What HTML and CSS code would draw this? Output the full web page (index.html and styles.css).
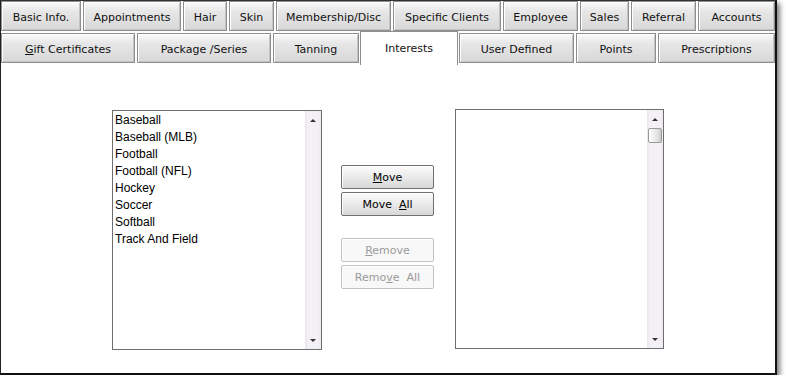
FILE: index.html
```html
<!DOCTYPE html>
<html lang="en">
<head>
  <meta charset="UTF-8">
  <title>Client Interests</title>
  <link rel="stylesheet" href="styles.css">
</head>
<body>

  <div class="window">
    <div class="tabs tabs-top">
      <div class="tab">Basic Info.</div>
      <div class="tab">Appointments</div>
      <div class="tab">Hair</div>
      <div class="tab">Skin</div>
      <div class="tab">Membership/Disc</div>
      <div class="tab">Specific Clients</div>
      <div class="tab">Employee</div>
      <div class="tab">Sales</div>
      <div class="tab">Referral</div>
      <div class="tab">Accounts</div>
    </div>
    <div class="tabs tabs-bottom">
      <div class="tab"><u>G</u>ift Certificates</div>
      <div class="tab">Package /Series</div>
      <div class="tab">Tanning</div>
      <div class="tab active">Interests</div>
      <div class="tab">User Defined</div>
      <div class="tab">Points</div>
      <div class="tab">Prescriptions</div>
    </div>

    <div class="panel">
      <div class="listbox">
        <ul class="items">
          <li>Baseball</li>
          <li>Baseball (MLB)</li>
          <li>Football</li>
          <li>Football (NFL)</li>
          <li>Hockey</li>
          <li>Soccer</li>
          <li>Softball</li>
          <li>Track And Field</li>
        </ul>
        <div class="scrollbar">
          <span class="arrow up"></span>
          <span class="arrow down"></span>
        </div>
      </div>

      <div class="actions">
        <button class="btn"><u>M</u>ove</button>
        <button class="btn">Move&nbsp; <u>A</u>ll</button>
        <button class="btn spaced" disabled><u>R</u>emove</button>
        <button class="btn" disabled>Remo<u>v</u>e&nbsp; All</button>
      </div>

      <div class="listbox listbox-right">
        <ul class="items"></ul>
        <div class="scrollbar">
          <span class="arrow up"></span>
          <span class="thumb"></span>
          <span class="arrow down"></span>
        </div>
      </div>
    </div>
  </div>

</body>
</html>
```

FILE: styles.css
```css
* {
  margin: 0;
  padding: 0;
  box-sizing: border-box;
}

body {
  font-family: 'DejaVu Sans', sans-serif;
  font-size: 11px;
  background-color: #fff;
  color: #000;
}

.window {
  width: 777px;
  height: 375px;
  background-color: #fff;
  border-top: 1px solid #333;
  border-left: 1px solid #222;
  border-right: 2px solid #111;
  border-bottom: 2px solid #111;
  box-shadow: 3px 3px 5px rgba(0, 0, 0, 0.5);
}

.tabs {
  display: grid;
  column-gap: 2px;
  height: 30px;
}

.tabs-top {
  grid-template-columns: 80px 98px 44px 45px 115px 108px 75px 49px 65px 77px;
}

.tabs-bottom {
  margin-top: 2px;
  grid-template-columns: 134px 134px 86px 96px 115px 80px 117px;
}

.tab {
  display: flex;
  align-items: center;
  justify-content: center;
  padding-top: 2px;
  color: #111;
  border: 1px solid #8e8e8e;
  background: linear-gradient(to bottom, #fbfbfb 0%, #e6e6e6 35%, #d8d8d8 100%);
  box-shadow: inset 1px 1px 0 #fff, inset -1px -1px 0 #c4c4c4;
  white-space: nowrap;
}

.tab.active {
  position: relative;
  z-index: 2;
  margin: -2px -1px -2px -1px;
  padding-top: 0;
  background: #fff;
  border-color: #8e8e8e;
  border-bottom: none;
  box-shadow: inset 1px 1px 0 #fff;
}

.panel {
  display: flex;
  align-items: flex-start;
  height: 310px;
  padding: 47px 0 0 111px;
}

.listbox {
  display: flex;
  width: 210px;
  height: 240px;
  border: 1px solid #6e6e6e;
  background-color: #fff;
}

.listbox-right {
  width: 209px;
  margin-top: -1px;
  margin-left: 21px;
}

.items {
  flex: 1;
  list-style: none;
  padding: 1px 0 0 2px;
  font-family: 'Liberation Sans', Arial, sans-serif;
  font-size: 12px;
  line-height: 17px;
}

.scrollbar {
  position: relative;
  width: 16px;
  background: linear-gradient(to right, #e8e6ec 0, #f3f1f5 3px, #f3f1f5 13px, #ebe9ee 16px);
}

.arrow {
  position: absolute;
  left: 5px;
  width: 0;
  height: 0;
  border-left: 3px solid transparent;
  border-right: 3px solid transparent;
}

.arrow.up {
  top: 8px;
  border-bottom: 3px solid #333;
}

.arrow.down {
  bottom: 7px;
  border-top: 3px solid #333;
}

.thumb {
  position: absolute;
  top: 18px;
  left: 1px;
  width: 14px;
  height: 15px;
  border: 1px solid #9a9a9a;
  border-radius: 2px;
  background: linear-gradient(to right, #fff, #e2e2e2 70%, #c9c9c9);
}

.actions {
  display: flex;
  flex-direction: column;
  gap: 3px;
  width: 93px;
  margin: 55px 0 0 19px;
}

.btn {
  height: 24px;
  font-family: 'DejaVu Sans', sans-serif;
  font-size: 11px;
  color: #000;
  border: 1px solid #707070;
  border-radius: 2px;
  background: linear-gradient(to bottom, #fcfcfc 0%, #ececec 45%, #d7d7d7 100%);
  box-shadow: inset 1px 1px 0 #fff;
}

.btn.spaced {
  margin-top: 19px;
}

.btn:disabled {
  color: #9a9a9a;
  border-color: #c2c2c2;
  background: #f8f8f8;
}
```
